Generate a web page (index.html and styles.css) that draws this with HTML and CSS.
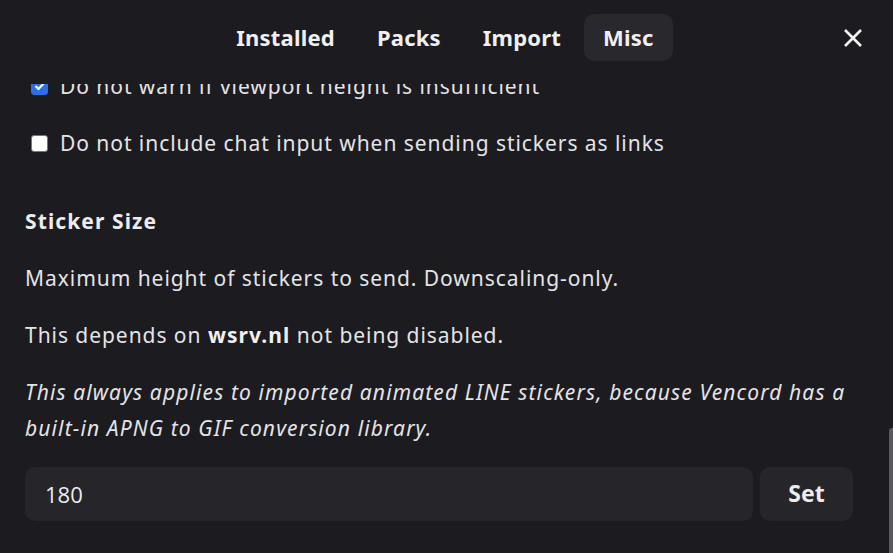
FILE: index.html
```html
<!DOCTYPE html>
<html>
<head>
<meta charset="utf-8">
<link rel="stylesheet" href="styles.css">
</head>
<body>
<div class="modal">
  <header class="header">
    <nav class="tabs">
      <button class="tab">Installed</button>
      <button class="tab">Packs</button>
      <button class="tab">Import</button>
      <button class="tab active">Misc</button>
    </nav>
    <button class="close" aria-label="Close">
      <svg width="20" height="20" viewBox="0 0 20 20"><path d="M2 2 L18 18 M18 2 L2 18" stroke="#f2f2f3" stroke-width="2.6" stroke-linecap="butt"/></svg>
    </button>
  </header>
  <main class="content">
    <label class="check-row">
      <span class="box checked"><svg width="12" height="10" viewBox="0 0 12 10"><path d="M1.5 5 L4.5 8 L10.5 1.5" stroke="#fff" stroke-width="2.2" fill="none"/></svg></span>
      <span>Do not warn if viewport height is insufficient</span>
    </label>
    <label class="check-row">
      <span class="box"></span>
      <span>Do not include chat input when sending stickers as links</span>
    </label>
    <h3 class="heading">Sticker Size</h3>
    <p class="para">Maximum height of stickers to send. Downscaling-only.</p>
    <p class="para">This depends on <b>wsrv.nl</b> not being disabled.</p>
    <p class="para italic">This always applies to imported animated LINE stickers, because Vencord has a built-in APNG to GIF conversion library.</p>
    <div class="input-row">
      <div class="input">180</div>
      <button class="set">Set</button>
    </div>
  </main>
  <div class="scrollbar"></div>
</div>
</body>
</html>
```
FILE: styles.css
```css
html, body {
  margin: 0;
  padding: 0;
  background: #1c1b20;
  height: 100%;
  overflow: hidden;
}
.modal {
  position: relative;
  width: 893px;
  height: 553px;
  overflow: hidden;
  font-family: "Noto Sans", "Open Sans", sans-serif;
  color: #e4e4e7;
}
.header {
  position: absolute;
  top: 0;
  left: 0;
  right: 0;
  height: 84px;
  background: #1c1b20;
  z-index: 2;
  display: flex;
  justify-content: center;
  align-items: flex-start;
  padding-top: 14px;
  box-sizing: border-box;
}
.tabs {
  display: flex;
  gap: 4px;
  margin-left: -3px;
}
.tab {
  font-family: inherit;
  font-size: 22px;
  font-weight: 700;
  color: #f0f0f2;
  background: transparent;
  border: none;
  border-radius: 10px;
  height: 47px;
  padding: 0 19px 2px;
  letter-spacing: 0.2px;
  cursor: pointer;
}
.tab.active {
  background: #29282d;
}
.close {
  position: absolute;
  top: 28px;
  right: 30px;
  width: 20px;
  height: 20px;
  padding: 0;
  border: none;
  background: transparent;
  display: block;
}
.close svg { display: block; }
.content {
  padding: 70px 40px 0 25px;
  font-size: 21px;
  letter-spacing: 0.95px;
}
.check-row {
  display: flex;
  align-items: center;
  gap: 12px;
  height: 32px;
  margin-bottom: 25px;
  padding-left: 6px;
}
.box {
  width: 15px;
  height: 15px;
  border: 1px solid #767676;
  border-radius: 3px;
  background: #fff;
  display: flex;
  align-items: center;
  justify-content: center;
  flex: none;
}
.box.checked {
  background: #2b6fe9;
  border-color: #2b6fe9;
}
.heading {
  margin: 44px 0 21px;
  font-size: 21px;
  font-weight: 700;
  line-height: 36px;
  color: #ececee;
  letter-spacing: 1.1px;
}
.para {
  margin: 0 0 21px;
  line-height: 36px;
}
.para b { font-weight: 700; color: #f0f0f2; letter-spacing: 1.1px; }
.italic { font-style: italic; margin-bottom: 21px; letter-spacing: 1.12px; }
.input-row {
  display: flex;
  gap: 7px;
  letter-spacing: 0;
}
.input {
  flex: 1;
  height: 54px;
  box-sizing: border-box;
  background: #26252a;
  border-radius: 10px;
  padding: 0 20px;
  display: flex;
  align-items: center;
  font-family: "Open Sans", "Noto Sans", sans-serif;
  font-size: 22px;
  color: #ececee;
}
.set {
  width: 93px;
  height: 54px;
  border: none;
  border-radius: 10px;
  background: #26252a;
  color: #ececee;
  font-family: inherit;
  font-size: 23px;
  font-weight: 700;
  padding: 0 0 2px;
}
.scrollbar {
  position: absolute;
  right: 0;
  top: 428px;
  width: 4px;
  bottom: 0;
  background: #5a5a5f;
  border-radius: 3px 0 0 0;
}
```
